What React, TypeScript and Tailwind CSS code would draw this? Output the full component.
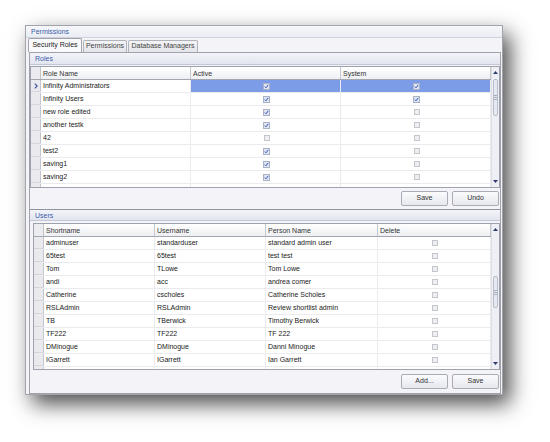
import React from "react";

type Col = { title: string; w: string; check?: boolean };

const roleCols: Col[] = [
  { title: "Role Name", w: "w-[150px]" },
  { title: "Active", w: "w-[150px]", check: true },
  { title: "System", w: "w-[150px]", check: true },
];

const roleRows: (string | boolean)[][] = [
  ["Infinity Administrators", true, true],
  ["Infinity Users", true, true],
  ["new role edited", true, false],
  ["another testk", true, false],
  ["42", false, false],
  ["test2", true, false],
  ["saving1", true, false],
  ["saving2", true, false],
];

const userCols: Col[] = [
  { title: "Shortname", w: "w-[111px]" },
  { title: "Username", w: "w-[111px]" },
  { title: "Person Name", w: "w-[112px]" },
  { title: "Delete", w: "w-[113px]", check: true },
];

const userRows: (string | boolean)[][] = [
  ["adminuser", "standarduser", "standard admin user", false],
  ["65test", "65test", "test test", false],
  ["Tom", "TLowe", "Tom Lowe", false],
  ["andi", "acc", "andrea comer", false],
  ["Catherine", "cscholes", "Catherine Scholes", false],
  ["RSLAdmin", "RSLAdmin", "Review shortlist admin", false],
  ["TB", "TBerwick", "Timothy Berwick", false],
  ["TF222", "TF222", "TF 222", false],
  ["DMinogue", "DMinogue", "Danni Minogue", false],
  ["IGarrett", "IGarrett", "Ian Garrett", false],
];

function Check({ on }: { on: boolean }) {
  if (!on)
    return <div className="w-[6px] h-[6px] border border-[#c4c6cc] bg-[#eeeff2]" />;
  return (
    <div className="w-[7px] h-[7px] border border-[#aab2c8] bg-[#dfe4ef] flex items-center justify-center">
      <svg width="5" height="5" viewBox="0 0 5 5">
        <path d="M0.8 2.6 L2 3.8 L4.2 0.9" stroke="#2f55c0" strokeWidth="1" fill="none" />
      </svg>
    </div>
  );
}

function Arrow({ up }: { up?: boolean }) {
  return (
    <div className="h-[9px] flex items-center justify-center">
      <svg width="5" height="3" viewBox="0 0 5 3">
        <path d={up ? "M0 3 L2.5 0 L5 3 Z" : "M0 0 L5 0 L2.5 3 Z"} fill="#2c3c6c" />
      </svg>
    </div>
  );
}

function Scrollbar({ thumbTop, thumbH }: { thumbTop: string; thumbH: string }) {
  return (
    <div className="w-[10px] bg-[#eef0f5] border-l border-[#dcdfe6] flex flex-col justify-between py-[1px]">
      <div className="flex flex-col">
        <Arrow up />
        <div className={`${thumbTop} ${thumbH} mx-[1px] rounded-[2px] border border-[#b9bdc9] bg-[#e6e9f1] flex flex-col items-center justify-center gap-[1px]`}>
          <div className="w-[3px] h-px bg-[#a8adba]" />
          <div className="w-[3px] h-px bg-[#a8adba]" />
          <div className="w-[3px] h-px bg-[#a8adba]" />
        </div>
      </div>
      <Arrow />
    </div>
  );
}

function Grid({
  cols,
  rows,
  bodyH,
  selected,
  thumbTop,
  thumbH,
}: {
  cols: Col[];
  rows: (string | boolean)[][];
  bodyH: string;
  selected?: number;
  thumbTop: string;
  thumbH: string;
}) {
  return (
    <div className="flex border border-[#9ea2ac] bg-white">
      <div className="flex flex-col">
        <div className="flex h-[13px] bg-gradient-to-b from-white to-[#eeeff2] border-b border-[#a4a7b0]">
          <div className="w-[10px] border-r border-[#c2c4cc] bg-[#ececf0]" />
          {cols.map((c) => (
            <div key={c.title} className={`${c.w} border-r border-[#c6c8cf] pl-[2px] leading-[13px] text-[#333]`}>
              {c.title}
            </div>
          ))}
        </div>
        <div className={`${bodyH} overflow-hidden`}>
          {[...rows, rows[0].map(() => "")].map((r, i) => (
            <div key={i} className="flex h-[13px] border-b border-[#ebebee]">
              <div className="w-[10px] bg-[#e9e9ee] border-r border-[#c4c6ce] border-b border-b-[#d4d6dc] flex items-center justify-center">
                {i === selected && (
                  <svg width="4" height="6" viewBox="0 0 4 6">
                    <path d="M0.8 0.6 L3.2 3 L0.8 5.4" stroke="#3a4f9e" strokeWidth="1.1" fill="none" />
                  </svg>
                )}
              </div>
              {cols.map((c, j) => {
                const v = r[j];
                const sel = i === selected && c.check;
                return (
                  <div
                    key={j}
                    className={`${c.w} border-r border-[#ebebee] leading-[12px] pl-[2px] text-[#222] ${
                      sel ? "bg-[#7d9ce8]" : ""
                    } ${c.check ? "flex items-center justify-center" : "whitespace-nowrap overflow-hidden"}`}
                  >
                    {c.check ? (v === "" ? null : <Check on={v === true} />) : (v as string)}
                  </div>
                );
              })}
            </div>
          ))}
        </div>
      </div>
      <Scrollbar thumbTop={thumbTop} thumbH={thumbH} />
    </div>
  );
}

function Btn({ label }: { label: string }) {
  return (
    <div className="w-[47px] h-[15px] rounded-[2px] border border-[#a9acb4] bg-gradient-to-b from-[#fbfbfd] to-[#e6e8ee] flex items-center justify-center text-[#333]">
      {label}
    </div>
  );
}

function Strip({ label, top }: { label: string; top?: boolean }) {
  return (
    <div
      className={`h-[12px] bg-gradient-to-b from-[#f3f4f9] to-[#e2e5ef] border-b border-[#c3c7d3] ${
        top ? "border-t border-t-[#8f939e]" : ""
      } pl-[5px] leading-[12px] text-[#3d5ca8]`}
    >
      {label}
    </div>
  );
}

export default function App() {
  return (
    <div className="w-[550px] h-[442px] bg-white pt-[25px] pl-[25px] font-['Liberation_Sans',Arial,sans-serif] text-[7px]">
      <div className="w-[478px] h-[370px] border border-[#a2a4ac] bg-[#f4f4f8] shadow-[7px_9px_20px_rgba(0,0,0,0.7)] flex flex-col">
        <div className="h-[12px] bg-gradient-to-b from-[#f6f7fb] to-[#eaedf4] border-b border-[#cfd2dc] pl-[5px] leading-[12px] text-[#3d5ca8]">
          Permissions
        </div>
        <div className="h-[14px] flex items-end pl-[2px] gap-[1px]">
          <div className="w-[54px] h-[14px] border border-b-0 border-[#a0a3ac] bg-[#fafafc] rounded-t-[2px] flex items-center justify-center text-[#222]">
            Security Roles
          </div>
          <div className="w-[44px] h-[12px] border border-b-0 border-[#b0b3bb] bg-gradient-to-b from-[#f4f4f6] to-[#e4e5ea] rounded-t-[2px] flex items-center justify-center text-[#444]">
            Permissions
          </div>
          <div className="w-[70px] h-[12px] border border-b-0 border-[#b0b3bb] bg-gradient-to-b from-[#f4f4f6] to-[#e4e5ea] rounded-t-[2px] flex items-center justify-center text-[#444]">
            Database Managers
          </div>
        </div>
        <div className="ml-[3px] mr-[1px] h-[342px] border border-[#9fa2ab] bg-[#f4f4f8] flex flex-col">
          <Strip label="Roles" />
          <div className="mt-[1px]">
            <Grid cols={roleCols} rows={roleRows} bodyH="h-[107px]" selected={0} thumbTop="mt-[2px]" thumbH="h-[37px]" />
          </div>
          <div className="h-[21px] flex justify-end items-start pt-[3px] pr-[1px] gap-[4px]">
            <Btn label="Save" />
            <Btn label="Undo" />
          </div>
          <Strip label="Users" top />
          <div className="mt-[2px] ml-[3px]">
            <Grid cols={userCols} rows={userRows} bodyH="h-[132px]" thumbTop="mt-[42px]" thumbH="h-[32px]" />
          </div>
          <div className="h-[21px] flex justify-end items-start pt-[4px] pr-[1px] gap-[4px]">
            <Btn label="Add..." />
            <Btn label="Save" />
          </div>
        </div>
      </div>
    </div>
  );
}
